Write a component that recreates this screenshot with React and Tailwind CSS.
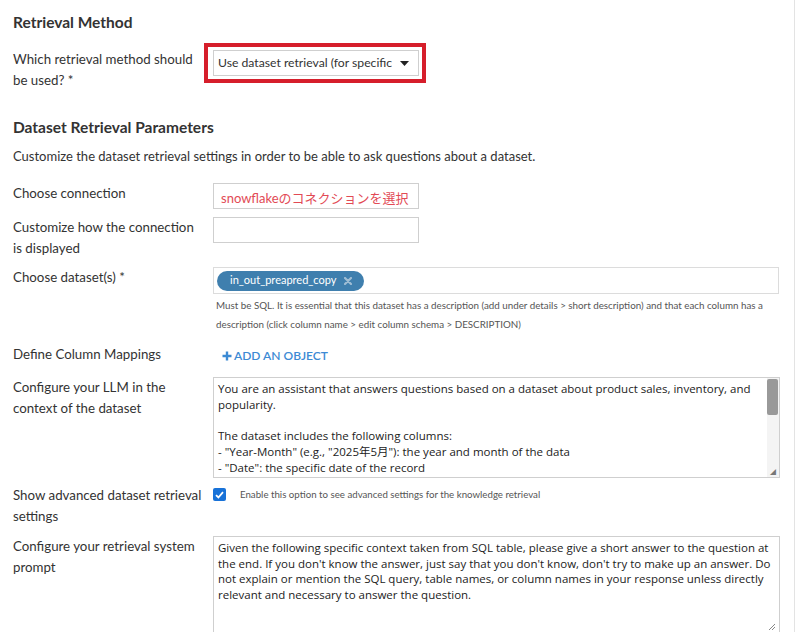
import React from "react";

function Label({ children }) {
  return (
    <div className="w-[213px] shrink-0 whitespace-nowrap pl-[13px] pr-2 text-[13.3px] leading-[21px] text-[#333]">
      {children}
    </div>
  );
}

export default function App() {
  return (
    <div className="w-[798px] h-[632px] overflow-hidden bg-white">
      <div className="w-[795px] h-[632px] border-r border-[#e3e3e3] text-[#333] font-['Lato','Noto_Sans_CJK_JP',sans-serif]">
        <div className="pl-[13px] pt-[12px] text-[15.5px] font-bold leading-[20px] text-[#333]">
          Retrieval Method
        </div>

        <div className="mt-[11px] flex">
          <Label>
            <div className="pt-[6px]">
              Which retrieval method should
              <br />
              be used? *
            </div>
          </Label>
          <div className="ml-[-9px] h-[40px] w-[222px] border-[4px] border-[#d61e2b] pt-[3px] pl-[5px]">
            <div className="flex h-[26px] w-[206px] items-center border border-[#cfcfcf] bg-white pl-[4px] pr-[9px] text-[12.2px]">
              <span className="flex-1 overflow-hidden whitespace-nowrap">Use dataset retrieval (for specific</span>
              <svg width="9" height="5" viewBox="0 0 9 5" className="ml-[8px] shrink-0">
                <path d="M0 0h9L4.5 5z" fill="#222" />
              </svg>
            </div>
          </div>
        </div>

        <div className="mt-[26px] pl-[13px] text-[15.5px] font-bold leading-[20px]">
          Dataset Retrieval Parameters
        </div>
        <div className="mt-[10px] pl-[13px] text-[13px] leading-[18px]">
          Customize the dataset retrieval settings in order to be able to ask questions about a dataset.
        </div>

        <div className="mt-[18px] flex">
          <Label>
            <div className="pt-[0px]">Choose connection</div>
          </Label>
          <div className="flex h-[26px] w-[206px] items-center border border-[#cfcfcf] pl-[7px] text-[13px] text-[#e24a55]">
            <span className="mt-[6px]">snowflakeのコネクションを選択</span>
          </div>
        </div>

        <div className="mt-[8px] flex">
          <Label>
            Customize how the connection
            <br />
            is displayed
          </Label>
          <div className="h-[26px] w-[206px] border border-[#cfcfcf]" />
        </div>

        <div className="mt-[8px] flex">
          <Label>
            <div className="pt-[0px]">Choose dataset(s) *</div>
          </Label>
          <div className="w-[566px]">
            <div className="flex h-[27px] items-center border border-[#dcdcdc] pl-[3px]">
              <div className="flex h-[20px] items-center gap-[8px] rounded-full bg-[#3f7fae] pl-[13px] pr-[12px] text-[11px] text-white">
                <span>in_out_preapred_copy</span>
                <svg width="8" height="8" viewBox="0 0 8 8">
                  <path d="M1 1l6 6M7 1L1 7" stroke="#9fbdd4" strokeWidth="2.2" strokeLinecap="round" />
                </svg>
              </div>
            </div>
            <div className="mt-[2px] pl-[3px] text-[9.8px] leading-[19px] text-[#555]">
              Must be SQL. It is essential that this dataset has a description (add under details &gt; short description) and that each column has a
              <br />
              description (click column name &gt; edit column schema &gt; DESCRIPTION)
            </div>
          </div>
        </div>

        <div className="mt-[10px] flex">
          <Label>Define Column Mappings</Label>
          <div className="flex items-center gap-[2px] pl-[9px] pt-[2px] text-[12px] font-semibold text-[#3c8ad4]">
            <svg width="10" height="10" viewBox="0 0 10 10">
              <path d="M5 0.5v9M0.5 5h9" stroke="#3c8ad4" strokeWidth="2.4" />
            </svg>
            <span>ADD AN OBJECT</span>
          </div>
        </div>

        <div className="mt-[12px] flex">
          <Label>
            <div className="pt-[0px]">
              Configure your LLM in the
              <br />
              context of the dataset
            </div>
          </Label>
          <div className="relative h-[101px] w-[567px] overflow-hidden border border-[#cfcfcf]">
            <div className="pl-[4px] pr-[14px] pt-[3px] font-['Open_Sans','Noto_Sans_CJK_JP',sans-serif] text-[11.5px] leading-[15.7px] text-[#222]">
              You are an assistant that answers questions based on a dataset about product sales, inventory, and
              <br />
              popularity.
              <br />
              <br />
              The dataset includes the following columns:
              <br />- "Year-Month" (e.g., "2025年5月"): the year and month of the data
              <br />- "Date": the specific date of the record
              <br />- "Product Name": the name of each product
            </div>
            <div className="absolute right-0 top-0 flex h-full w-[12px] flex-col bg-[#f4f4f4]">
              <div className="mt-[1px] h-[36px] w-[11px] rounded-[2px] bg-[#999]" />
              <div className="flex-1" />
              <div className="h-[10px] text-center text-[6px] leading-[10px] text-[#777]">◢</div>
            </div>
          </div>
        </div>

        <div className="mt-[7px] flex">
          <Label>
            Show advanced dataset retrieval
            <br />
            settings
          </Label>
          <div className="flex items-start pt-[3px]">
            <div className="flex h-[13px] w-[13px] items-center justify-center rounded-[2px] bg-[#1872d8]">
              <svg width="9" height="8" viewBox="0 0 9 8">
                <path d="M1 4.2l2.4 2.3L8 1.2" stroke="white" strokeWidth="1.8" fill="none" />
              </svg>
            </div>
            <span className="ml-[14px] text-[9.7px] leading-[13px] text-[#555]">
              Enable this option to see advanced settings for the knowledge retrieval
            </span>
          </div>
        </div>

        <div className="mt-[9px] flex">
          <Label>
            <div className="pt-[0px]">
              Configure your retrieval system
              <br />
              prompt
            </div>
          </Label>
          <div className="relative h-[110px] w-[567px] border border-[#cfcfcf]">
            <div className="pl-[4px] pr-[6px] pt-[3px] font-['Open_Sans','Noto_Sans_CJK_JP',sans-serif] text-[11.5px] leading-[15.7px] text-[#222]">
              Given the following specific context taken from SQL table, please give a short answer to the question at
              <br />
              the end. If you don't know the answer, just say that you don't know, don't try to make up an answer. Do
              <br />
              not explain or mention the SQL query, table names, or column names in your response unless directly
              <br />
              relevant and necessary to answer the question.
            </div>
            <svg className="absolute bottom-[14px] right-[3px]" width="8" height="8" viewBox="0 0 8 8">
              <path d="M7 1L1 7M7 4L4 7" stroke="#888" strokeWidth="1" />
            </svg>
          </div>
        </div>
      </div>
    </div>
  );
}
